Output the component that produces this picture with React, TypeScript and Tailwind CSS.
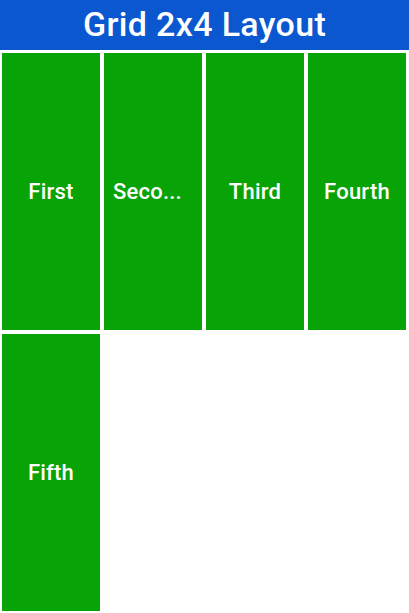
import React from "react";

type Cell = { label: string; start?: boolean };

const cells: Cell[] = [
  { label: "First" },
  { label: "Seco...", start: true },
  { label: "Third" },
  { label: "Fourth" },
  { label: "Fifth" },
];

export default function App() {
  return (
    <div
      className="w-[409px] h-[613px] bg-white flex flex-col"
      style={{ fontFamily: "Roboto, 'Liberation Sans', sans-serif" }}
    >
      <header className="h-[50px] shrink-0 bg-[#0b57d0] flex items-center justify-center">
        <h1 className="text-white text-[34px] font-medium leading-none tracking-[0.01em] mb-[3px]">
          Grid 2x4 Layout
        </h1>
      </header>
      <div className="grid grid-cols-[98px_98px_98px_98px] grid-rows-[277px_277px] gap-[4px] pt-[3px] px-[2px] pb-[2px]">
        {cells.map((c) => (
          <div
            key={c.label}
            className={
              c.start
                ? "bg-[#07a307] flex items-center justify-start pl-[9px] overflow-hidden"
                : "bg-[#07a307] flex items-center justify-center overflow-hidden"
            }
          >
            <span className="text-white text-[22px] font-medium leading-none tracking-[0.01em] whitespace-nowrap">
              {c.label}
            </span>
          </div>
        ))}
      </div>
    </div>
  );
}
